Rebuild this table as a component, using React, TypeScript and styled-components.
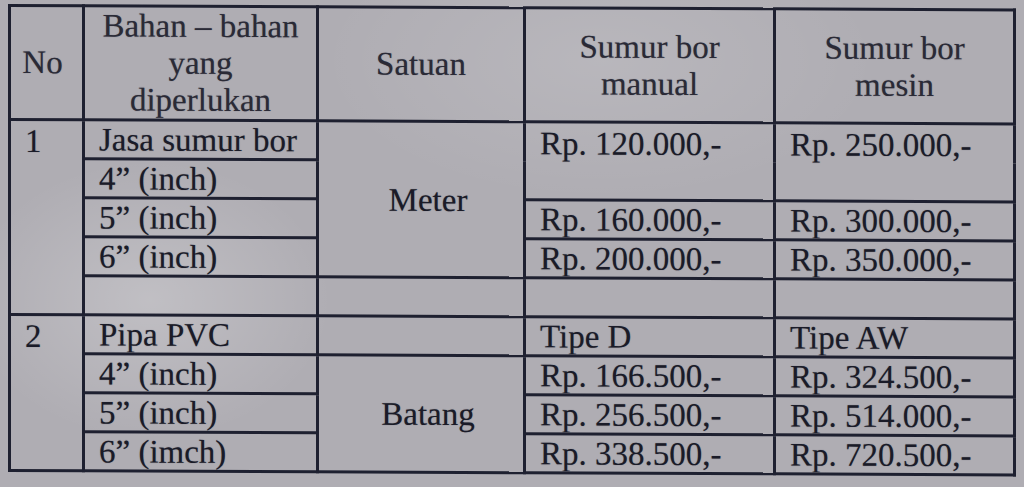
import styled, { createGlobalStyle } from 'styled-components';

const serifStack = '"Liberation Serif", serif';

const GlobalStyle = createGlobalStyle`
  html, body {
    margin: 0;
    padding: 0;
    width: 1024px;
    height: 487px;
    overflow: hidden;
    background: #aeacb2;
  }
`;

const Screen = styled.div`
  width: 1024px;
  height: 487px;
  box-sizing: border-box;
  padding: 4px 0 0 8px;
  font-family: ${serifStack};
  background:
    radial-gradient(ellipse 260px 200px at 150px 300px, rgba(255, 255, 255, 0.22), transparent 70%),
    radial-gradient(ellipse 400px 200px at 600px 60px, rgba(255, 255, 255, 0.12), transparent 70%),
    #afadb3;
`;

/* the photo is taken slightly askew: right side sits a few px lower */
const Table = styled.table`
  border-collapse: collapse;
  table-layout: fixed;
  width: 1005px;
  border: 3px solid #1e2030;
  font-family: ${serifStack};
  font-size: 33px;
  color: #1a1b28;
  text-shadow: 0 0 1px rgba(20, 20, 40, 0.45);
  transform: skewY(0.25deg);
  transform-origin: left top;
`;

const HeadCell = styled.th<{ $narrow?: boolean }>`
  border: 3px solid #1e2030;
  height: 110px;
  padding: ${(p) => (p.$narrow ? '0 8px 0 0' : '0 6px')};
  font-family: ${serifStack};
  font-weight: normal;
  line-height: 37px;
  text-align: center;
  vertical-align: middle;
  color: #2a2a36;
`;

const Cell = styled.td<{ $center?: boolean; $top?: boolean }>`
  border: 3px solid #1e2030;
  height: 36px;
  padding: 0 0 0 14px;
  font-family: ${serifStack};
  line-height: 34px;
  white-space: nowrap;
  overflow: hidden;
  text-align: ${(p) => (p.$center ? 'center' : 'left')};
  vertical-align: ${(p) => (p.$top ? 'top' : 'middle')};
  padding-top: ${(p) => (p.$top ? '3px' : '0')};
`;

const NoCell = styled(Cell)`
  padding-left: 14px;
`;

export default function App() {
  return (
    <Screen>
      <GlobalStyle />
      <Table>
        <colgroup>
          <col style={{ width: 74 }} />
          <col style={{ width: 234 }} />
          <col style={{ width: 207 }} />
          <col style={{ width: 250 }} />
          <col style={{ width: 240 }} />
        </colgroup>
        <thead>
          <tr>
            <HeadCell $narrow>No</HeadCell>
            <HeadCell>
              Bahan – bahan
              <br />
              yang
              <br />
              diperlukan
            </HeadCell>
            <HeadCell>Satuan</HeadCell>
            <HeadCell>
              Sumur bor
              <br />
              manual
            </HeadCell>
            <HeadCell>
              Sumur bor
              <br />
              mesin
            </HeadCell>
          </tr>
        </thead>
        <tbody>
          <tr>
            <NoCell rowSpan={5} $top>
              1
            </NoCell>
            <Cell>Jasa sumur bor</Cell>
            <Cell rowSpan={4} $center>
              Meter
            </Cell>
            <Cell rowSpan={2} $top>
              Rp. 120.000,-
            </Cell>
            <Cell rowSpan={2} $top>
              Rp. 250.000,-
            </Cell>
          </tr>
          <tr>
            <Cell>4” (inch)</Cell>
          </tr>
          <tr>
            <Cell>5” (inch)</Cell>
            <Cell>Rp. 160.000,-</Cell>
            <Cell>Rp. 300.000,-</Cell>
          </tr>
          <tr>
            <Cell>6” (inch)</Cell>
            <Cell>Rp. 200.000,-</Cell>
            <Cell>Rp. 350.000,-</Cell>
          </tr>
          <tr>
            <Cell />
            <Cell />
            <Cell />
            <Cell />
          </tr>
          <tr>
            <NoCell rowSpan={4} $top>
              2
            </NoCell>
            <Cell>Pipa PVC</Cell>
            <Cell />
            <Cell>Tipe D</Cell>
            <Cell>Tipe AW</Cell>
          </tr>
          <tr>
            <Cell>4” (inch)</Cell>
            <Cell rowSpan={3} $center>
              Batang
            </Cell>
            <Cell>Rp. 166.500,-</Cell>
            <Cell>Rp. 324.500,-</Cell>
          </tr>
          <tr>
            <Cell>5” (inch)</Cell>
            <Cell>Rp. 256.500,-</Cell>
            <Cell>Rp. 514.000,-</Cell>
          </tr>
          <tr>
            <Cell>6” (imch)</Cell>
            <Cell>Rp. 338.500,-</Cell>
            <Cell>Rp. 720.500,-</Cell>
          </tr>
        </tbody>
      </Table>
    </Screen>
  );
}
